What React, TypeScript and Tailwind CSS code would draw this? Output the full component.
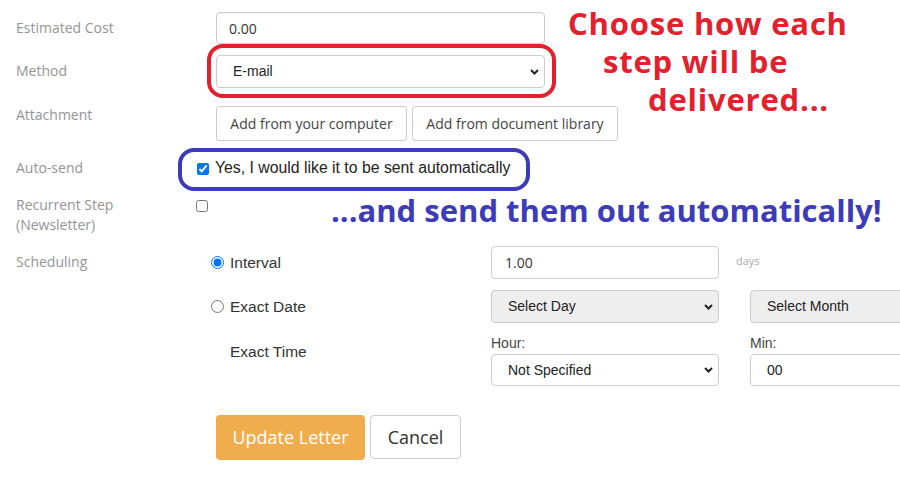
import React from 'react';

const sans = "font-['Open_Sans',sans-serif]";
const arial = "font-['Liberation_Sans',Arial,sans-serif]";

function Chevron() {
  return (
    <svg width="9" height="6" viewBox="0 0 9 6" className="pointer-events-none absolute right-[5px] top-1/2 -translate-y-1/2">
      <path d="M1 1l3.5 3.5L8 1" fill="none" stroke="#222" strokeWidth="2" />
    </svg>
  );
}

function FakeSelect({ value, width, grey }: { value: string; width: string; grey?: boolean }) {
  return (
    <div
      className={`relative flex h-full items-center rounded-[4px] border border-[#ccc] pl-[16px] text-[14px] text-[#222] ${arial} ${width} ${
        grey ? 'bg-[#eeeeee]' : 'bg-white'
      }`}
    >
      {value}
      <Chevron />
    </div>
  );
}

function Label({ children, className = '' }: { children: React.ReactNode; className?: string }) {
  return (
    <div className={`w-[200px] shrink-0 pl-4 text-[14px] leading-[20px] text-[#949494] ${sans} ${className}`}>
      {children}
    </div>
  );
}

export default function App() {
  return (
    <div className="relative h-[500px] w-[900px] overflow-hidden bg-white">
      <div className="flex flex-col pt-[12px]">
        {/* Estimated cost */}
        <div className="flex h-[32px] items-start">
          <Label className="mt-[6px]">Estimated Cost</Label>
          <div className="ml-[16px] h-full">
            <div className={`flex h-full w-[329px] items-center rounded-[4px] border border-[#ccc] pl-[12px] text-[14px] text-[#333] shadow-[inset_0_1px_1px_rgba(0,0,0,0.05)] ${sans}`}>
              0.00
            </div>
          </div>
        </div>

        {/* Method */}
        <div className="mt-[11px] flex h-[33px] items-start">
          <Label className="mt-[6px]">Method</Label>
          <div className="ml-[16px] h-full">
            <FakeSelect value="E-mail" width="w-[329px]" />
          </div>
        </div>

        {/* Attachment */}
        <div className="mt-[18px] flex h-[35px] items-start">
          <Label className="-mt-px">Attachment</Label>
          <div className="ml-[16px] flex h-full gap-[5px]">
            <button className={`h-full w-[191px] rounded-[3px] border border-[#ccc] bg-white text-[14px] text-[#444] ${sans}`}>
              Add from your computer
            </button>
            <button className={`h-full w-[206px] rounded-[3px] border border-[#ccc] bg-white text-[14px] text-[#444] ${sans}`}>
              Add from document library
            </button>
          </div>
        </div>

        {/* Auto-send */}
        <div className="mt-[17px] flex h-[20px] items-start">
          <Label>Auto-send</Label>
          <div className="ml-[-3px] flex items-start">
            <input type="checkbox" defaultChecked className="m-0 mt-[5px] h-[12px] w-[12px] accent-[#0075ff]" />
            <span className={`ml-[6px] text-[15.8px] leading-[20px] text-[#222] ${arial}`}>
              Yes, I would like it to be sent automatically
            </span>
          </div>
        </div>

        {/* Recurrent step */}
        <div className="mt-[17px] flex items-start">
          <Label>
            Recurrent Step
            <br />
            (Newsletter)
          </Label>
          <input type="checkbox" className="m-0 ml-[-4px] mt-[5px] h-[12px] w-[12px]" />
        </div>

        {/* Scheduling */}
        <div className="mt-[11px] flex items-start">
          <Label className="mt-[6px]">Scheduling</Label>
          <div className="ml-[11px] flex flex-col">
            <div className="flex h-[33px] items-start">
              <div className="flex h-full w-[280px] items-center gap-[6px]">
                <input type="radio" name="sched" defaultChecked className="m-0 h-[13px] w-[13px] accent-[#0075ff]" />
                <span className={`text-[15.5px] leading-[20px] text-[#333] ${arial}`}>Interval</span>
              </div>
              <div className={`flex h-full w-[228px] items-center rounded-[4px] border border-[#ccc] pl-[13px] text-[14px] text-[#333] ${sans}`}>
                1.00
              </div>
              <span className={`ml-[17px] mt-[8px] text-[11px] leading-[14px] text-[#aaa] ${sans}`}>days</span>
            </div>

            <div className="mt-[11px] flex h-[33px] items-start">
              <div className="flex h-full w-[280px] items-center gap-[6px]">
                <input type="radio" name="sched" className="m-0 h-[13px] w-[13px]" />
                <span className={`text-[15.5px] leading-[20px] text-[#333] ${arial}`}>Exact Date</span>
              </div>
              <div className="h-full">
                <FakeSelect value="Select Day" width="w-[228px]" grey />
              </div>
              <div className="ml-[31px] h-full">
                <FakeSelect value="Select Month" width="w-[228px]" grey />
              </div>
            </div>

            <div className="mt-[10px] flex items-start">
              <div className="w-[280px] pl-[19px] pt-[6px]">
                <span className={`text-[15.5px] leading-[20px] text-[#333] ${arial}`}>Exact Time</span>
              </div>
              <div className="flex w-[228px] flex-col">
                <span className={`text-[14px] leading-[20px] text-[#444] ${arial}`}>Hour:</span>
                <div className="mt-[1px] h-[32px]">
                  <FakeSelect value="Not Specified" width="w-[228px]" />
                </div>
              </div>
              <div className="ml-[31px] flex flex-col">
                <span className={`text-[14px] leading-[20px] text-[#444] ${arial}`}>Min:</span>
                <div className="mt-[1px] h-[32px]">
                  <FakeSelect value="00" width="w-[228px]" />
                </div>
              </div>
            </div>
          </div>
        </div>

        {/* Buttons */}
        <div className="mt-[29px] flex gap-[5px] pl-[216px]">
          <button className={`h-[45px] w-[149px] rounded-[4px] bg-[#f0ad4e] text-[18px] text-white ${sans}`}>
            Update Letter
          </button>
          <button className={`h-[44px] w-[91px] rounded-[4px] border border-[#ccc] bg-white text-[18px] text-[#333] ${sans}`}>
            Cancel
          </button>
        </div>
      </div>

      {/* Annotations */}
      <div className="pointer-events-none absolute left-[207px] top-[44px] h-[54px] w-[349px] rounded-[16px] border-[4px] border-[#e3202b]" />
      <div className="pointer-events-none absolute left-[178px] top-[148px] h-[43px] w-[352px] rounded-[16px] border-[4px] border-[#3c3cba]" />

      <div className={`pointer-events-none absolute left-[568px] top-[4px] text-[31px] font-bold leading-[38px] tracking-[0.8px] text-[#e3202b] ${sans}`}>
        <div className="whitespace-nowrap">Choose how each</div>
        <div className="whitespace-nowrap pl-[35px]">step will be</div>
        <div className="whitespace-nowrap pl-[80px]">delivered...</div>
      </div>
      <div className={`pointer-events-none absolute left-[331px] top-[191px] whitespace-nowrap text-[31px] font-bold leading-[38px] text-[#3c3cba] ${sans}`}>
        ...and send them out automatically!
      </div>
    </div>
  );
}
